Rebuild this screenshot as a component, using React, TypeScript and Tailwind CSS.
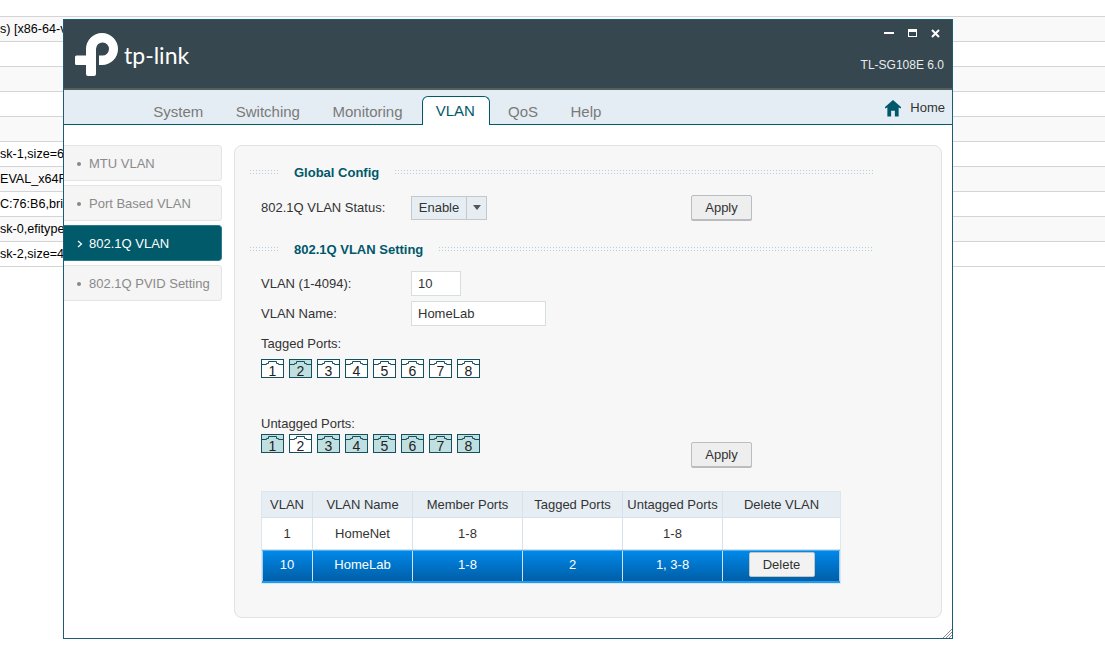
const font = "font-['Liberation_Sans',Arial,sans-serif]"

const bgRows = ["s) [x86-64-virtio", "", "", "", "", "sk-1,size=64G", "EVAL_x64FRE", "C:76:B6,bridge", "sk-0,efitype=4m", "sk-2,size=4M"]
const tabs = ["System", "Switching", "Monitoring", "VLAN", "QoS", "Help"]
const sideItems = ["MTU VLAN", "Port Based VLAN", "802.1Q VLAN", "802.1Q PVID Setting"]
const ports = [1, 2, 3, 4, 5, 6, 7, 8]

function Logo() {
  return (
    <svg width="44" height="44" viewBox="0 0 44 44" className="shrink-0">
      <path
        fill="#fff"
        d="M11 16 A16 16 0 1 1 27 32 H24 V22.500 H27 A6.500 6.500 0 1 0 21 16 V41 Q21 43 19 43 H13 Q11 43 11 41 V32 H1.500 Q0 32 0 30.500 V24 Q0 22.500 1.500 22.500 H11 Z"
      />
    </svg>
  )
}

function Section({ title }: { title: string }) {
  return (
    <div className="flex items-center h-[16px] w-[625px]">
      <div className="w-[29px] h-[6px] bg-[radial-gradient(#b4cfe0_1px,transparent_1px)] bg-[length:3px_3px]" />
      <div className="ml-[16px] mr-[15px] pt-[1px] text-[13px] font-bold text-[#00586b]">{title}</div>
      <div className="flex-1 h-[6px] bg-[radial-gradient(#b4cfe0_1px,transparent_1px)] bg-[length:3px_3px]" />
    </div>
  )
}

function Port({ n, on }: { n: number; on: boolean }) {
  return (
    <div className={`relative w-[23px] h-[19px] border border-[#14505e] pt-[3px] text-center text-[14px] leading-[17px] text-[#222] ${on ? "bg-[#c0dfe1]" : "bg-white"}`}>
      <svg width="21" height="6" viewBox="0 0 21 6" className="absolute left-0 top-0">
        <path d="M0 4.500 H4.500 V3.500 H6.500 V1.500 H14.500 V3.500 H16.500 V4.500 H21" fill="none" stroke="#14505e" strokeWidth="1" />
      </svg>
      <span className="relative">{n}</span>
    </div>
  )
}

function PortRow({ active }: { active: number[] }) {
  return (
    <div className="flex gap-[5px]">
      {ports.map((n) => (
        <Port key={n} n={n} on={active.includes(n)} />
      ))}
    </div>
  )
}

function ApplyBtn() {
  return (
    <div className="w-[61px] h-[25px] flex items-center justify-center rounded-[2px] border border-[#b9bec0] bg-[#eeeeee] shadow-[0_1px_0_#bbb] text-[13px] text-[#333]">
      Apply
    </div>
  )
}

const colW = ["w-[51px]", "w-[100px]", "w-[110px]", "w-[100px]", "w-[100px]", "w-[117px]"]
const heads = ["VLAN", "VLAN Name", "Member Ports", "Tagged Ports", "Untagged Ports", "Delete VLAN"]

function VlanTable() {
  return (
    <div className="w-[580px] border border-[#dbe6ee] text-[13px] text-[#333]">
      <div className="flex h-[26px] bg-[#e6eef4] border-b border-[#d5e2eb]">
        {heads.map((h, i) => (
          <div key={h} className={`${colW[i]} flex items-center justify-center ${i < 5 ? "border-r border-[#d5e2eb]" : ""}`}>
            {h}
          </div>
        ))}
      </div>
      <div className="flex h-[32px] bg-white border-b border-[#d5e2eb]">
        {["1", "HomeNet", "1-8", "", "1-8", ""].map((c, i) => (
          <div key={i} className={`${colW[i]} flex items-center justify-center ${i < 5 ? "border-r border-[#d5e2eb]" : ""}`}>
            {c}
          </div>
        ))}
      </div>
      <div className="flex h-[33px] border-t border-[#4fb0f2] border-b-2 border-b-[#1e9bf2] bg-gradient-to-b from-[#0088e8] to-[#005fa8] shadow-[inset_1px_0_0_#9fd0f5,inset_-1px_0_0_#9fd0f5] text-white">
        {["10", "HomeLab", "1-8", "2", "1, 3-8", ""].map((c, i) => (
          <div key={i} className={`${colW[i]} flex items-center justify-center pb-[3px] ${i < 5 ? "border-r border-[#cfe3f2]" : ""}`}>
            {i === 5 ? (
              <div className="w-[66px] h-[25px] flex items-center justify-center rounded-[2px] border border-[#c4c4c4] bg-[#f2f2f2] text-[#333]">Delete</div>
            ) : (
              c
            )}
          </div>
        ))}
      </div>
    </div>
  )
}

export default function App() {
  return (
    <div className={`relative w-[1105px] h-[664px] overflow-hidden bg-white ${font}`}>
      {/* page behind the dialog */}
      <div className="pt-[16px]">
        <div className="border-t border-[#d4d4d4]" />
        {bgRows.map((r, i) => (
          <div
            key={i}
            className={`h-[25px] border-b border-[#d4d4d4] whitespace-nowrap text-[12.600px] leading-[25px] text-black ${i % 2 === 0 ? "bg-[#f9f9f9]" : "bg-white"}`}
          >
            {r}
          </div>
        ))}
      </div>

      {/* dialog window */}
      <div className="absolute left-[63px] top-[19px] w-[890px] h-[620px] border border-[#1d5c78] bg-white flex flex-col">
        <div className="h-[70px] shrink-0 bg-[#37474f] border-b-2 border-[#52605f] flex justify-between">
          <div className="flex items-center pl-[11px] pt-[1px] gap-[5px]">
            <Logo />
            <span className="text-[23px] font-['Lato',sans-serif] text-white mt-[1px]">tp-link</span>
          </div>
          <div className="flex flex-col items-end pr-[8px]">
            <div className="flex items-center gap-[14px] h-[26px] pr-[4px]">
              <div className="w-[10px] h-[2px] bg-white" />
              <div className="w-[9px] h-[8px] border border-t-[3px] border-white" />
              <svg width="9" height="9" viewBox="0 0 9 9">
                <path d="M1 1 L8 8 M8 1 L1 8" stroke="#fff" strokeWidth="2" />
              </svg>
            </div>
            <div className="mt-[10px] text-[12px] text-[#e6ecee]">TL-SG108E 6.0</div>
          </div>
        </div>

        <div className="h-[35px] shrink-0 bg-[#e4edf3] border-b border-[#005a6a] flex items-end pl-[73px] text-[15px] text-[#7a7a7a]">
          {tabs.map((t) =>
            t === "VLAN" ? (
              <div key={t} className="h-[29px] w-[68px] -mb-px ml-[3px] mr-[2px] pt-[1px] pr-[1px] flex items-center justify-center bg-white border border-b-0 border-[#005a6a] rounded-t-[6px] text-[#00586b]">
                {t}
              </div>
            ) : (
              <div key={t} className="h-[26px] px-[16.250px] pt-[2px] flex items-center">{t}</div>
            )
          )}
          <div className="ml-auto mr-[7px] h-full pt-[1px] flex items-center gap-[9px] text-[13px] text-[#333]">
            <svg width="16" height="18" viewBox="0 0 17 18">
              <path fill="#00586b" d="M8.500 0.500 L17 8 L17 9.500 L14.500 8.500 L14.500 18 L10.500 18 L10.500 12 L6.500 12 L6.500 18 L2.500 18 L2.500 8.500 L0 9.500 L0 8 Z" />
            </svg>
            Home
          </div>
        </div>

        <div className="flex-1 flex pt-[20px]">
          <div className="w-[158px] shrink-0 flex flex-col gap-[4px]">
            {sideItems.map((s, i) => {
              const on = i === 2
              return (
                <div
                  key={s}
                  className={`h-[36px] pt-[1px] flex items-center rounded-r-[4px] border border-l-0 text-[13px] ${on ? "bg-[#005a6a] border-[#2c7b8e] text-white" : "bg-[#f5f5f5] border-[#e4e4e4] text-[#8a8a8a]"}`}
                >
                  <span className="w-[25px] pl-[13px] flex">
                    {on ? (
                      <svg width="6" height="8" viewBox="0 0 6 8">
                        <path d="M1 1 L4.500 4 L1 7" fill="none" stroke="#fff" strokeWidth="1.200" />
                      </svg>
                    ) : (
                      <div className="w-[4px] h-[4px] rounded-full bg-[#888]" />
                    )}
                  </span>
                  {s}
                </div>
              )
            })}
          </div>

          <div className="ml-[12px] w-[708px] h-[473px] rounded-[8px] border border-[#e2e2e2] bg-[#f7f7f7] text-[13px] leading-[20px] text-[#333] px-[14px] pt-[18px]">
            <Section title="Global Config" />
            <div className="flex items-center mt-[15px] pl-[12px] h-[25px]">
              <div className="w-[150px]">802.1Q VLAN Status:</div>
              <div className="flex h-[24px] w-[76px] border border-[#c4c8ca] bg-[#e6eef4]">
                <div className="flex-1 flex items-center justify-center border-r border-[#c4c8ca]">Enable</div>
                <div className="w-[19px] flex items-center justify-center">
                  <div className="w-0 h-0 border-x-[4px] border-x-transparent border-t-[5px] border-t-[#555]" />
                </div>
              </div>
              <div className="ml-[204px]">
                <ApplyBtn />
              </div>
            </div>
            <div className="mt-[21px]">
              <Section title="802.1Q VLAN Setting" />
            </div>
            <div className="flex items-center mt-[14px] pl-[12px] h-[25px]">
              <div className="w-[150px]">VLAN (1-4094):</div>
              <div className="w-[50px] h-[25px] pl-[6px] flex items-center border border-[#d8dde0] bg-white">10</div>
            </div>
            <div className="flex items-center mt-[5px] pl-[12px] h-[25px]">
              <div className="w-[150px]">VLAN Name:</div>
              <div className="w-[135px] h-[25px] pl-[6px] flex items-center border border-[#d8dde0] bg-white">HomeLab</div>
            </div>
            <div className="mt-[8px] pl-[12px]">Tagged Ports:</div>
            <div className="mt-[5px] pl-[12px]">
              <PortRow active={[2]} />
            </div>
            <div className="mt-[36px] pl-[12px]">Untagged Ports:</div>
            <div className="flex pl-[12px] h-[20px]">
              <PortRow active={[1, 3, 4, 5, 6, 7, 8]} />
              <div className="ml-[211px] mt-[8px]">
                <ApplyBtn />
              </div>
            </div>
            <div className="mt-[37px] pl-[12px]">
              <VlanTable />
            </div>
          </div>
        </div>

        {/* resize grip */}
        <svg width="10" height="10" viewBox="0 0 10 10" className="absolute right-0 bottom-0">
          <path d="M10 1 L1 10 M10 4 L4 10 M10 7 L7 10" stroke="#8a8a8a" strokeWidth="1" />
        </svg>
      </div>
    </div>
  )
}
